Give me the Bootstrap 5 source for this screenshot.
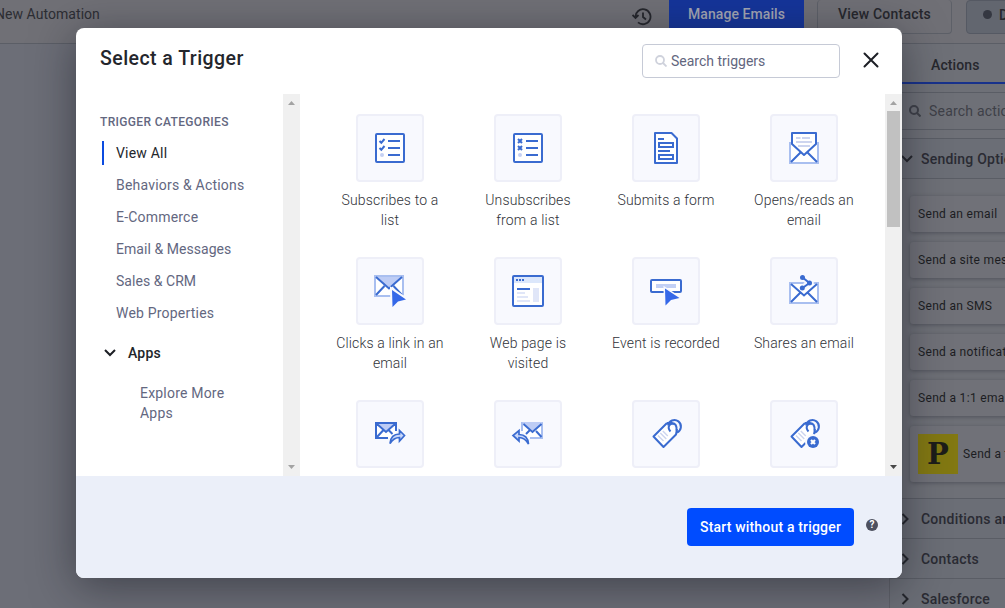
<!DOCTYPE html>
<html lang="en">
<head>
<meta charset="utf-8">
<meta name="viewport" content="width=device-width, initial-scale=1">
<title>Select a Trigger</title>
<link href="https://cdn.jsdelivr.net/npm/bootstrap@5.3.0/dist/css/bootstrap.min.css" rel="stylesheet">
<style>
body{font-family:Roboto,"Noto Sans",sans-serif;font-size:14px;line-height:20px;height:608px;background:#6c6e77;color:#24262c;overflow:hidden;letter-spacing:.2px}
.topbar{height:44px;background:#707076;border-bottom:1px solid #5b5e66;overflow:hidden}
.topbar>*{flex:none}
.crumb{width:640px;margin-left:-5px;height:26px;color:#2c2d33;letter-spacing:.05px}
.top-btn{height:34px;border-radius:4px;font-weight:500;padding:4px 0;text-align:center}
.manage{width:135px;background:#15359a;color:#a3a6b3;border-radius:0 0 4px 4px;letter-spacing:.08px}
.contacts{width:135px;border:1px solid #5d6068;border-top:0;color:#26272d;letter-spacing:.22px}
.draft{width:60px;background:#62666f;border:1px solid #555963;color:#26272d}
.side{width:116px;background:#6e7077;border-left:1px solid #5e6068;height:564px;overflow:hidden}
.tab-actions{height:40px;border-bottom:2px solid #18328c;padding:11px 0 0 41px;font-weight:500;line-height:20px;color:#26272d;letter-spacing:.1px}
.find{height:38px;margin-top:8px;border-top:1px solid #5a5d65;border-bottom:1px solid #5a5d65;padding-left:19px;color:#3e4048;white-space:nowrap}
.sect{height:40px;border-bottom:1px solid #5a5d65;padding-left:11px;font-weight:500;color:#2a2b33;white-space:nowrap;background:#6b6e76;letter-spacing:.22px}
.act{height:36px;margin-left:20px;padding-left:8px;background:#707178;border-radius:3px 0 0 3px;box-shadow:0 1px 4px #50525a;font-size:12px;color:#1c1d22;white-space:nowrap;letter-spacing:.32px}
.pipe{width:40px;height:40px;background:#827812;color:#1d1d19;font:700 29px/40px "DejaVu Serif",serif;letter-spacing:0}
.dlg{position:absolute;left:76px;top:28px;width:826px;height:550px;background:#fff;border-radius:8px;box-shadow:0 8px 44px rgba(20,22,32,.5)}
.dlg-head{height:66px}
.dlg-title{font-size:19.5px;font-weight:500;line-height:24px;color:#24262c;margin:19px 0 0 24px;letter-spacing:.45px}
.lookup{width:198px;height:34px;margin:16px 23px 0 0;border:1px solid #c6cad6;border-radius:4px;color:#62667e;padding-left:12px;letter-spacing:0}
.closer{margin:24px 23px 0 0;width:16px;height:16px}
.dlg-body{height:382px}
.cats{width:207px;padding:18px 0 0 24px;color:#63677f}
.cap{font-size:12px;font-weight:500;letter-spacing:.35px}
.cat{height:32px;padding:6px 0 6px 16px}
.cat.tight{letter-spacing:.05px}
.cat.on{color:#24262c;position:relative}
.cat.on::before{content:"";position:absolute;left:2px;top:4px;width:2px;height:24px;background:#0b4be0}
.bar{width:17px;background:#f0f0f0;padding:7px 0}
.thumb{width:13px;height:116px;background:#c1c1c1;margin-top:6px}
.tiles{width:585px;padding:20px 0 0 21px;overflow:hidden}
.tiles .row{width:552px;height:382px;overflow:hidden;--bs-gutter-x:0}
.trig{height:143px;text-align:center;color:#303238;font-weight:300;letter-spacing:.15px}
.tile{width:68px;height:68px;background:#f8f9fe;border:2px solid #eeeff8;border-radius:4px;margin:0 auto 8px}
.tile svg{width:32px;height:32px;fill:none;stroke:#3a6bd0;stroke-width:2;overflow:visible}
.tile svg .lt{stroke:#a9bff0}
.tile svg .pale{stroke:#cdd5ef}
.dlg-foot{height:102px;background:#ebeff9;border-radius:0 0 8px 8px;padding:32px 23px 0 0}
.start{width:167px;height:38px;background:#004cff;color:#fff;border:0;border-radius:4px;font-size:14px;font-weight:500;padding:0;letter-spacing:.18px}
.help{width:12px;height:12px;border-radius:50%;background:#4d505f;color:#fff;font-size:10px;font-weight:700;line-height:12px;text-align:center;margin:11px 1px 0 12px;letter-spacing:0}
svg{display:block;flex:none}
</style>
</head>
<body>
<header class="topbar d-flex">
  <div class="crumb pt-1">New Automation</div>
  <svg style="margin:8px 0 0 -3px" width="20" height="18" viewBox="0 0 20 18" fill="none" stroke="#25262c" stroke-width="1.8"><path d="M3.5 9A7.500 7.500 0 1 1 6 14.300M.5 7l3 3 3-3M11 4.500V9l3 2.500"/></svg>
  <div class="top-btn manage" style="margin-left:17px">Manage Emails</div>
  <div class="top-btn contacts" style="margin-left:13px">View Contacts</div>
  <div class="top-btn draft d-flex ps-3" style="margin-left:14px"><svg style="margin:5px 7px 0 0" width="9" height="9"><circle cx="4.500" cy="4.500" r="4.500" fill="#343741"/></svg>Draft</div>
</header>
<aside class="side ms-auto">
  <div class="tab-actions">Actions</div>
  <div class="find d-flex align-items-center"><svg width="12" height="12" viewBox="0 0 12 12" fill="none" stroke="#3f4149" stroke-width="2"><circle cx="5" cy="5" r="4"/><path d="M8 8l3.500 3.500"/></svg><span class="ms-2">Search actions</span></div>
  <div class="sect d-flex align-items-center" style="margin-top:8px;height:41px;border-top:1px solid #5a5d65"><svg width="12" height="8" viewBox="0 0 12 8" fill="none" stroke="#24262c" stroke-width="2"><path d="M1 1l5 5 5-5"/></svg><span class="ms-2">Sending Options</span></div>
  <div class="d-grid" style="gap:10px;padding:17px 0 16px">
    <div class="act d-flex align-items-center">Send an email</div>
    <div class="act d-flex align-items-center">Send a site message</div>
    <div class="act d-flex align-items-center">Send an SMS</div>
    <div class="act d-flex align-items-center">Send a notification</div>
    <div class="act d-flex align-items-center">Send a 1:1 email</div>
    <div class="act d-flex align-items-center" style="height:56px"><span class="pipe text-center" style="margin-right:5px">P</span>Send a transaction</div>
  </div>
  <div class="sect d-flex align-items-center" style="height:41px;border-top:1px solid #5a5d65"><svg class="me-1" width="8" height="12" viewBox="0 0 8 12" fill="none" stroke="#24262c" stroke-width="2"><path d="M1.500 1l5 5-5 5"/></svg><span class="ms-2">Conditions and</span></div>
  <div class="sect d-flex align-items-center"><svg class="me-1" width="8" height="12" viewBox="0 0 8 12" fill="none" stroke="#24262c" stroke-width="2"><path d="M1.500 1l5 5-5 5"/></svg><span class="ms-2">Contacts</span></div>
  <div class="sect d-flex align-items-center"><svg class="me-1" width="8" height="12" viewBox="0 0 8 12" fill="none" stroke="#24262c" stroke-width="2"><path d="M1.500 1l5 5-5 5"/></svg><span class="ms-2">Salesforce</span></div>
</aside>

<main class="dlg" role="dialog">
  <div class="dlg-head d-flex">
    <h1 class="dlg-title me-auto">Select a Trigger</h1>
    <div class="lookup d-flex align-items-center"><svg width="12" height="12" viewBox="0 0 12 12" fill="none" stroke="#cfd2dc" stroke-width="1.8"><circle cx="5" cy="5" r="4"/><path d="M8 8l3.500 3.500"/></svg><span class="ms-1">Search triggers</span></div>
    <svg class="closer" viewBox="0 0 16 16" fill="none" stroke="#1d1f25" stroke-width="2" stroke-linecap="round"><path d="M1.500 1.500l13 13M14.500 1.500l-13 13"/></svg>
  </div>
  <div class="dlg-body d-flex">
    <nav class="cats">
      <div class="cap mb-1">TRIGGER CATEGORIES</div>
      <div class="cat on" style="margin-top:5px">View All</div>
      <div class="cat">Behaviors &amp; Actions</div>
      <div class="cat">E-Commerce</div>
      <div class="cat tight">Email &amp; Messages</div>
      <div class="cat tight">Sales &amp; CRM</div>
      <div class="cat">Web Properties</div>
      <div class="d-flex align-items-center ps-1 text-dark" style="margin-top:14px;height:20px;font-weight:500"><svg width="12" height="8" viewBox="0 0 12 8" fill="none" stroke="#1d1f25" stroke-width="2"><path d="M1 1l5 5 5-5"/></svg><span class="ms-2 ps-1">Apps</span></div>
      <div style="margin:20px 0 0 40px;width:100px">Explore More Apps</div>
    </nav>
    <div class="bar d-flex flex-column align-items-center justify-content-between"><svg width="7" height="4"><path d="M0 4L3.500 0 7 4z" fill="#a3a3a3"/></svg><svg width="7" height="4"><path d="M0 0L3.500 4 7 0z" fill="#a3a3a3"/></svg></div>
    <section class="tiles">
      <div class="row">
        <div class="col-3 trig"><div class="tile d-flex align-items-center justify-content-center"><svg viewBox="0 0 32 32"><rect x="2" y="2" width="28" height="28" rx="1" fill="#fff"/><path d="M14 9h12M14 16h12M14 23h12M5.500 9l1.800 1.800L10.500 7M5.500 16l1.800 1.800 3.200-3.800"/><circle cx="8" cy="23" r="2" fill="#c5d0f3" stroke="none"/></svg></div>Subscribes to a<br>list</div>
        <div class="col-3 trig"><div class="tile d-flex align-items-center justify-content-center"><svg viewBox="0 0 32 32"><rect x="2" y="2" width="28" height="28" rx="1" fill="#fff"/><path d="M14 9h12M14 16h12M14 23h12M6 7l4 4m0-4l-4 4M6 14l4 4m0-4l-4 4"/><circle cx="8" cy="23" r="2" fill="#c5d0f3" stroke="none"/></svg></div>Unsubscribes<br>from a list</div>
        <div class="col-3 trig"><div class="tile d-flex align-items-center justify-content-center"><svg viewBox="0 0 32 32"><path fill="#fff" stroke-linejoin="round" d="M5 1h16.500L27 6.500V31H5z"/><path d="M8 7h6M8 19h12M9 11h14v4H9zM9 23h14v4H9z"/></svg></div>Submits a form</div>
        <div class="col-3 trig"><div class="tile d-flex align-items-center justify-content-center"><svg viewBox="0 0 32 32"><path class="lt" fill="#fff" d="M4 11H2v20h28V11h-2"/><path fill="#fff" stroke-linejoin="round" d="M4 12V1h24v11L16 23z"/><path class="pale" d="M8 6h4.500M14 6h8M8 10h16M10 14h12"/><path d="M3 30l9.500-9.500M29 30l-9.500-9.500"/></svg></div>Opens/reads an<br>email</div>

        <div class="col-3 trig"><div class="tile d-flex align-items-center justify-content-center"><svg viewBox="0 0 32 32"><path class="lt" fill="#fff" d="M1 1h28v20H1z"/><path fill="#bdccf5" stroke="none" d="M2 2h26L15 13z"/><path d="M2 2l13 11.500L28 2M2 20l8.500-9M28 20l-8.500-9"/><path d="M18 15l14 9.500-8 2L18.500 32z" fill="#f8f9fe" stroke="#f8f9fe" stroke-width="4"/><path d="M18 15l14 9.500-8 2L18.500 32z" fill="#3568e8" stroke="none"/></svg></div>Clicks a link in an<br>email</div>
        <div class="col-3 trig"><div class="tile d-flex align-items-center justify-content-center"><svg viewBox="0 0 32 32"><rect x="1" y="1" width="30" height="30" rx="1" fill="#fff"/><path d="M2 2h28v6H2z" fill="#dce7fb" stroke="none"/><path d="M4 5h2M7 5h2M10 5h2M5 14h13"/><path stroke="#e0e6f8" d="M5 18h8M5 22h11M5 26h13"/><path stroke="none" fill="#e0e6f8" d="M21 13h6v14h-6z"/></svg></div>Web page is<br>visited</div>
        <div class="col-3 trig"><div class="tile d-flex align-items-center justify-content-center"><svg viewBox="0 0 32 32"><rect x="1" y="5" width="30" height="12" rx="1" fill="#fff"/><path d="M6 9h20v4H6z" fill="#c2d0f5" stroke="none"/><path d="M15 13.500l14.500 9.500-8.500 2-5.500 5.500z" fill="#f8f9fe" stroke="#f8f9fe" stroke-width="3"/><path d="M15 13.500l14.500 9.500-8.500 2-5.500 5.500z" fill="#3568e8" stroke="none"/></svg></div>Event is recorded</div>
        <div class="col-3 trig"><div class="tile d-flex align-items-center justify-content-center"><svg viewBox="0 0 32 32"><path class="lt" fill="#fff" d="M2 8h28v20H2z"/><path d="M3 9l13 11.500L29 9M3 27l9.500-9.500M29 27l-9.500-9.500"/><path stroke="#f8f9fe" stroke-width="6" d="M14.500 2.500L21.500 8l-7 5"/><path d="M14.500 2.500L21.500 8l-7 5"/><g fill="#3a6bd0" stroke="none"><circle cx="14.500" cy="2.500" r="2.500"/><circle cx="21.500" cy="8" r="2.500"/><circle cx="14.300" cy="13" r="2.500"/></g></svg></div>Shares an email</div>

        <div class="col-3 trig"><div class="tile d-flex align-items-center justify-content-center"><svg viewBox="0 0 32 32"><path stroke="none" fill="#fff" d="M2 5h20v15H2z"/><path stroke="none" fill="#bdccf5" d="M3 5h18l-9 8z"/><path d="M14 20H2V5h20v8M3 6l9 8 9-8M3 19l6-6.500M14.500 12l4 4"/><path d="M16 25.500c.5-6 4-9.500 9.500-9.500v-3.500l5 5-5 5.500v-3.500c-4 0-7 2-9.500 6z" fill="#c9d8fb" stroke-width="1.700"/></svg></div></div>
        <div class="col-3 trig"><div class="tile d-flex align-items-center justify-content-center"><svg viewBox="0 0 32 32"><path class="lt" fill="#fff" d="M10 13V5h20v15H18"/><path stroke="none" fill="#bdccf5" d="M10 4h21l-10 9z"/><path d="M11.500 6l9 8L29.500 6M29.500 19L24 13M18 12l-4 4"/><path d="M16.500 26c-.5-6-4-9.500-9.500-9.500V12.500l-6 5L7 23v-3.500c4 0 7 2 9.500 6.500z" fill="#c9d8fb" stroke-width="1.700"/></svg></div></div>
        <div class="col-3 trig"><div class="tile d-flex align-items-center justify-content-center"><svg viewBox="0 0 32 32"><path fill="#fff" stroke-linejoin="round" d="M17 5L3.500 18.500l10 10.500L26 16.500 27 11"/><path class="pale" stroke-width="1.500" d="M8 17.500l5.500 5.500M10.300 15l6 6M12.800 13l5 5"/><path d="M18 7.500a6.500 6.500 0 1 1 9 7M17 5h5c4 .5 5 3 4.500 7.500M20.500 13.500C16.500 9 20 4.500 24 6"/></svg></div></div>
        <div class="col-3 trig"><div class="tile d-flex align-items-center justify-content-center"><svg viewBox="0 0 32 32"><path fill="#fff" stroke-linejoin="round" d="M17 5L3.500 18.500l10 10.500L26 16.500 27 11"/><path class="pale" stroke-width="1.500" d="M8 17.500l5.500 5.500M10.300 15l6 6M12.800 13l5 5"/><path d="M18 7.500a6.500 6.500 0 1 1 9 7M17 5h5c4 .5 5 3 4.500 7.500M20.500 13.500C16.500 9 20 4.500 24 6"/><circle cx="25" cy="24" r="8" fill="#f8f9fe" stroke="none"/><circle cx="25" cy="24" r="6" fill="#3a6bd0" stroke="none"/><path stroke="#fff" stroke-width="2.200" d="M23 22l4 4m0-4l-4 4"/></svg></div></div>
      </div>
    </section>
    <div class="bar d-flex flex-column align-items-center"><svg width="7" height="4"><path d="M0 4L3.500 0 7 4z" fill="#a3a3a3"/></svg><div class="thumb"></div><svg class="mt-auto" width="7" height="4"><path d="M0 0L3.500 4 7 0z" fill="#484848"/></svg></div>
  </div>
  <footer class="dlg-foot d-flex justify-content-end">
    <button class="start">Start without a trigger</button><span class="help">?</span>
  </footer>
</main>
<script src="https://cdn.jsdelivr.net/npm/bootstrap@5.3.0/dist/js/bootstrap.bundle.min.js"></script>
</body>
</html>
